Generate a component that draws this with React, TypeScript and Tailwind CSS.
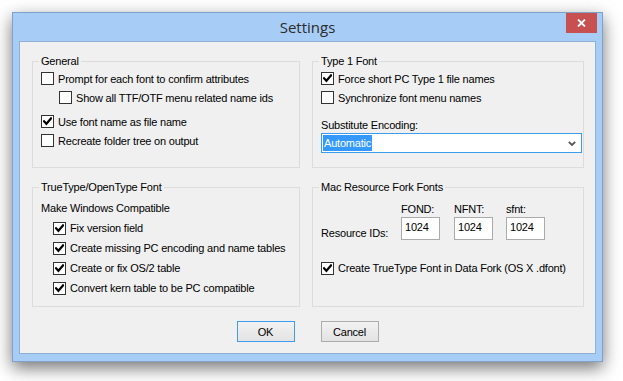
import type { ReactNode } from "react";

const font = "font-['Liberation_Sans',Arial,sans-serif] text-[11px] tracking-[-0.2px] text-black";

function CheckMark() {
  return (
    <svg width="9" height="9" viewBox="0 0 9 9">
      <path d="M1 4.2 L3.4 6.8 L8 1.4" stroke="#000" strokeWidth="2.2" fill="none" strokeLinecap="square" />
    </svg>
  );
}

function CheckBox({ checked = false, label, className = "" }: { checked?: boolean; label: string; className?: string }) {
  return (
    <div className={`flex items-center ${className}`}>
      <span className="flex h-[13px] w-[13px] shrink-0 items-center justify-center border border-[#333] bg-white">
        {checked && <CheckMark />}
      </span>
      <span className="ml-[4px] leading-[14px]">{label}</span>
    </div>
  );
}

function Group({ title, className = "", children }: { title: string; className?: string; children: ReactNode }) {
  return (
    <fieldset className={`border border-[#dcdcdc] pl-[8px] ${className}`}>
      <legend className="-ml-[2px] px-[2px] leading-[14px]">{title}</legend>
      {children}
    </fieldset>
  );
}

function IdField({ label, className = "" }: { label: string; className?: string }) {
  return (
    <div className={`flex w-[39px] flex-col ${className}`}>
      <span className="leading-[14px]">{label}</span>
      <div className="mt-[1px] h-[23px] border border-[#ababab] bg-white pl-[3px] pt-[2px] leading-[14px]">1024</div>
    </div>
  );
}

function DialogButton({ label, isDefault = false }: { label: string; isDefault?: boolean }) {
  return (
    <button
      className={`flex h-[21px] w-[58px] items-center justify-center border bg-gradient-to-b from-[#f2f2f2] to-[#e3e3e3] leading-[14px] ${
        isDefault ? "border-[#3c9cf0]" : "border-[#acacac]"
      }`}
    >
      {label}
    </button>
  );
}

export default function App() {
  return (
    <div className="h-[381px] w-[623px] overflow-hidden bg-white pl-[12px] pt-[12px]">
      <div className="h-[350px] w-[591px] border border-[#7fa2cb] bg-[#a7cdf6] shadow-[0_6px_16px_rgba(0,0,0,0.55)]">
        {/* title bar */}
        <div className="relative flex h-[28px] items-center justify-center">
          <span className="font-['Open_Sans',sans-serif] text-[15px] text-[#2b2b2b]">Settings</span>
          <div className="absolute right-[5px] top-0 flex h-[20px] w-[31px] items-center justify-center bg-[#c75050]">
            <svg width="9" height="8" viewBox="0 0 9 8">
              <path d="M1 0.5 L8 7.5 M8 0.5 L1 7.5" stroke="#fff" strokeWidth="1.8" />
            </svg>
          </div>
        </div>

        {/* client area */}
        <div className={`mx-[6px] h-[313px] border border-[#8db0d7] bg-[#f0f0f0] pl-[12px] pt-[12px] ${font}`}>
          <div className="grid grid-cols-[268px_272px] gap-x-[12px] gap-y-[12px]">
            <Group title="General" className="h-[114px]">
              <div className="pt-[1px]">
                <CheckBox label="Prompt for each font to confirm attributes" className="h-[19px]" />
                <CheckBox label="Show all TTF/OTF menu related name ids" className="ml-[18px] h-[19px]" />
                <CheckBox checked label="Use font name as file name" className="mt-[5px] h-[19px]" />
                <CheckBox label="Recreate folder tree on output" className="h-[19px]" />
              </div>
            </Group>

            <Group title="Type 1 Font" className="h-[114px]">
              <div className="pt-[1px]">
                <CheckBox checked label="Force short PC Type 1 file names" className="h-[19px]" />
                <CheckBox label="Synchronize font menu names" className="h-[19px]" />
                <div className="mt-[11px] leading-[14px]">Substitute Encoding:</div>
                <div className="mt-[1px] flex h-[20px] w-[261px] items-center border border-[#3c9cf0] bg-white">
                  <span className="ml-[1px] bg-[#3399ff] px-[1px] leading-[16px] text-white">Automatic</span>
                  <svg className="ml-auto mr-[5px]" width="8" height="5" viewBox="0 0 8 5">
                    <path d="M0.8 0.8 L4 4 L7.2 0.8" stroke="#555" strokeWidth="1.8" fill="none" />
                  </svg>
                </div>
              </div>
            </Group>

            <Group title="TrueType/OpenType Font" className="h-[127px]">
              <div className="pt-[5px]">
                <div className="flex h-[19px] items-center">Make Windows Compatible</div>
                <div className="pl-[12px]">
                  <CheckBox checked label="Fix version field" className="h-[20px]" />
                  <CheckBox checked label="Create missing PC encoding and name tables" className="h-[20px]" />
                  <CheckBox checked label="Create or fix OS/2 table" className="h-[20px]" />
                  <CheckBox checked label="Convert kern table to be PC compatible" className="h-[20px]" />
                </div>
              </div>
            </Group>

            <Group title="Mac Resource Fork Fonts" className="h-[127px]">
              <div className="pt-[8px]">
                <div className="flex">
                  <span className="w-[80px] self-end leading-[14px]">Resource IDs:</span>
                  <IdField label="FOND:" />
                  <IdField label="NFNT:" className="ml-[14px]" />
                  <IdField label="sfnt:" className="ml-[13px]" />
                </div>
                <CheckBox checked label="Create TrueType Font in Data Fork (OS X .dfont)" className="mt-[18px] h-[20px]" />
              </div>
            </Group>
          </div>

          <div className="mt-[14px] flex justify-center gap-[26px] pr-[12px]">
            <DialogButton label="OK" isDefault />
            <DialogButton label="Cancel" />
          </div>
        </div>
      </div>
    </div>
  );
}
